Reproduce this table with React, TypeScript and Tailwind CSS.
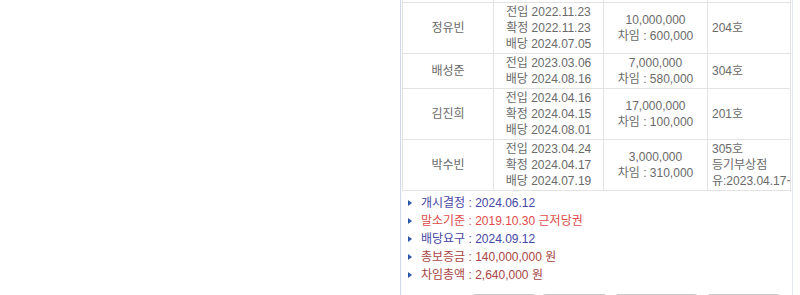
import React from "react"

type Tenant = {
  name: string
  dates: string[]
  deposit: string
  rent: string
  note: string[]
}

const tenants: Tenant[] = [
  {
    name: "정유빈",
    dates: ["전입 2022.11.23", "확정 2022.11.23", "배당 2024.07.05"],
    deposit: "10,000,000",
    rent: "차임 : 600,000",
    note: ["204호"],
  },
  {
    name: "배성준",
    dates: ["전입 2023.03.06", "배당 2024.08.16"],
    deposit: "7,000,000",
    rent: "차임 : 580,000",
    note: ["304호"],
  },
  {
    name: "김진희",
    dates: ["전입 2024.04.16", "확정 2024.04.15", "배당 2024.08.01"],
    deposit: "17,000,000",
    rent: "차임 : 100,000",
    note: ["201호"],
  },
  {
    name: "박수빈",
    dates: ["전입 2023.04.24", "확정 2024.04.17", "배당 2024.07.19"],
    deposit: "3,000,000",
    rent: "차임 : 310,000",
    note: ["305호", "등기부상점", "유:2023.04.17~"],
  },
]

const summary = [
  { label: "개시결정 : 2024.06.12", color: "text-[#4646a8]" },
  { label: "말소기준 : 2019.10.30 근저당권", color: "text-[#e04b4b]" },
  { label: "배당요구 : 2024.09.12", color: "text-[#4646a8]" },
  { label: "총보증금 : 140,000,000 원", color: "text-[#a84545]" },
  { label: "차임총액 : 2,640,000 원", color: "text-[#a84545]" },
]

const cell = "border border-[#e3e3e3] px-0 py-px align-middle"
const btn = "h-[22px] rounded-[3px] border border-[#c9c9c9] bg-[#f6f6f6]"

export default function App() {
  return (
    <div className="w-[800px] h-[295px] overflow-hidden bg-white flex font-['Liberation_Sans','Noto_Sans_CJK_KR',sans-serif] text-[12px] leading-[16px]">
      <div className="w-[400px] shrink-0" />

      <div className="w-[393px] shrink-0 border-l border-r border-l-[#cfd9ea] border-r-[#e4e8ef] pl-px">
        <table className="w-[388px] table-fixed border-collapse text-[#6a6a6a]">
          <colgroup>
            <col className="w-[91px]" />
            <col className="w-[110px]" />
            <col className="w-[104px]" />
            <col className="w-[83px]" />
          </colgroup>
          <tbody>
            <tr className="h-[2px]">
              <td className="border border-t-0 border-[#e3e3e3] p-0 h-[2px] leading-[0px]" />
              <td className="border border-t-0 border-[#e3e3e3] p-0 h-[2px] leading-[0px]" />
              <td className="border border-t-0 border-[#e3e3e3] p-0 h-[2px] leading-[0px]" />
              <td className="border border-t-0 border-[#e3e3e3] p-0 h-[2px] leading-[0px]" />
            </tr>
            {tenants.map((t) => (
              <tr key={t.name}>
                <td className={`${cell} text-center`}>{t.name}</td>
                <td className={`${cell} text-center`}>
                  {t.dates.map((d) => (
                    <div key={d}>{d}</div>
                  ))}
                </td>
                <td className={`${cell} text-center`}>
                  <div>{t.deposit}</div>
                  <div>{t.rent}</div>
                </td>
                <td className={`${cell} pl-[4px] overflow-hidden whitespace-nowrap`}>
                  {t.note.map((n) => (
                    <div key={n}>{n}</div>
                  ))}
                </td>
              </tr>
            ))}
          </tbody>
        </table>

        <ul className="pt-[3px] pl-[6px]">
          {summary.map((s) => (
            <li key={s.label} className={`flex items-center h-[18px] ${s.color}`}>
              <span className="w-0 h-0 border-y-[3px] border-y-transparent border-l-[4px] border-l-[#2b55a6] mr-[9px]" />
              {s.label}
            </li>
          ))}
        </ul>

        {/* button row, only its top edge is in view */}
        <div className="flex pl-[70px] mt-[10px]">
          <button aria-label="인쇄" className={`w-[64px] ${btn}`} />
          <button aria-label="관심" className={`ml-[6px] w-[65px] ${btn}`} />
          <button aria-label="입찰표" className={`ml-[8px] w-[83px] ${btn}`} />
          <button aria-label="메모" className={`ml-[9px] w-[73px] ${btn}`} />
        </div>
      </div>
    </div>
  )
}
